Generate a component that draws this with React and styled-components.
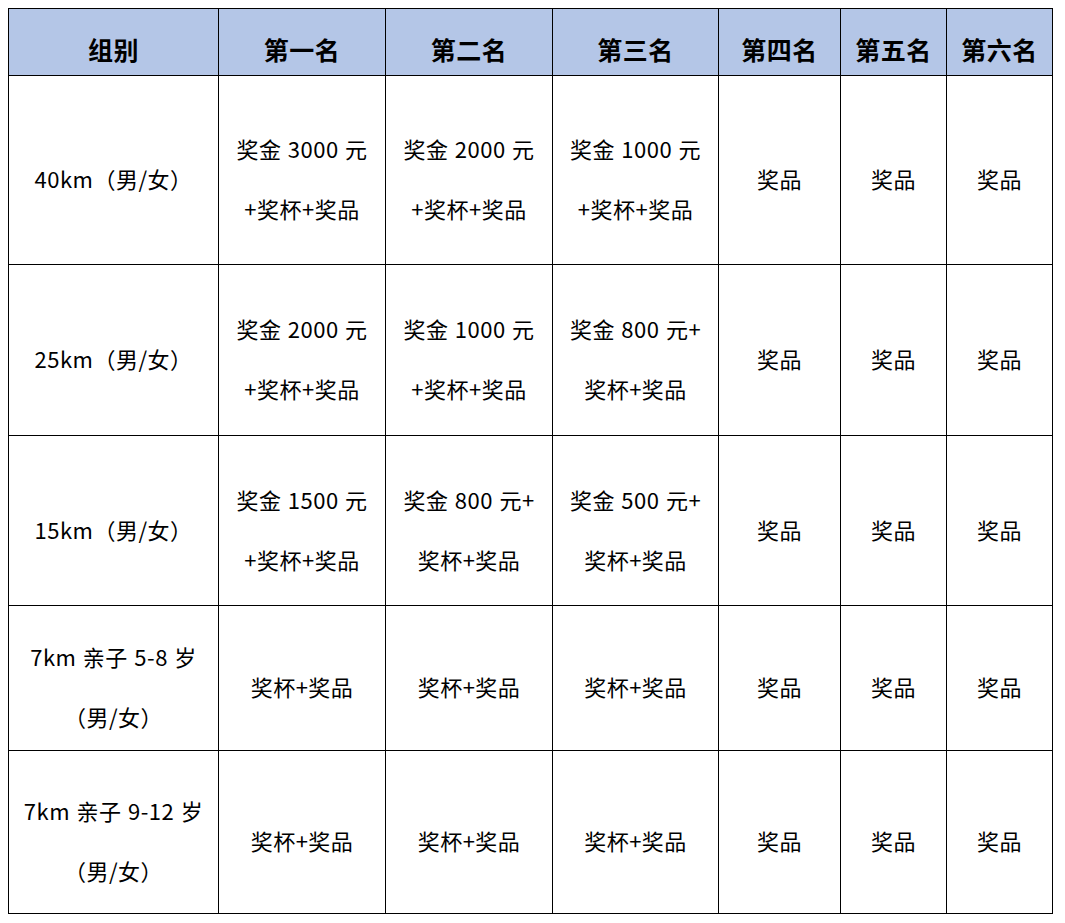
import React from 'react';
import styled, { createGlobalStyle } from 'styled-components';

const GlobalStyle = createGlobalStyle`
  body {
    margin: 8px;
    background: #ffffff;
    font-family: "Noto Sans CJK SC", "Liberation Sans", sans-serif;
    color: #000;
  }
`;

const Grid = styled.div`
  display: grid;
  grid-template-columns: 209px 166px 166px 165px 121px 105px 105px;
  grid-template-rows: 66px 188px 170px 169px 144px 162px;
  gap: 1px;
  width: max-content;
  background: #000;
  border: 1px solid #000;
`;

const HeadCell = styled.div`
  background: #b4c6e7;
  display: flex;
  align-items: center;
  justify-content: center;
  padding-top: 14px;
  box-sizing: border-box;
  font-size: 25px;
  font-weight: 700;
  letter-spacing: 0.5px;
`;

const Cell = styled.div`
  background: #fff;
  display: flex;
  flex-direction: column;
  align-items: center;
  justify-content: center;
  padding-top: 16px;
  box-sizing: border-box;
  font-size: 22px;
  line-height: 60px;
  letter-spacing: 0.5px;
  word-spacing: 1px;
  white-space: nowrap;
`;

const headers = ['组别', '第一名', '第二名', '第三名', '第四名', '第五名', '第六名'];

const rows = [
  [
    ['40km（男/女）'],
    ['奖金 3000 元', '+奖杯+奖品'],
    ['奖金 2000 元', '+奖杯+奖品'],
    ['奖金 1000 元', '+奖杯+奖品'],
    ['奖品'], ['奖品'], ['奖品'],
  ],
  [
    ['25km（男/女）'],
    ['奖金 2000 元', '+奖杯+奖品'],
    ['奖金 1000 元', '+奖杯+奖品'],
    ['奖金 800 元+', '奖杯+奖品'],
    ['奖品'], ['奖品'], ['奖品'],
  ],
  [
    ['15km（男/女）'],
    ['奖金 1500 元', '+奖杯+奖品'],
    ['奖金 800 元+', '奖杯+奖品'],
    ['奖金 500 元+', '奖杯+奖品'],
    ['奖品'], ['奖品'], ['奖品'],
  ],
  [
    ['7km 亲子 5-8 岁', '（男/女）'],
    ['奖杯+奖品'], ['奖杯+奖品'], ['奖杯+奖品'],
    ['奖品'], ['奖品'], ['奖品'],
  ],
  [
    ['7km 亲子 9-12 岁', '（男/女）'],
    ['奖杯+奖品'], ['奖杯+奖品'], ['奖杯+奖品'],
    ['奖品'], ['奖品'], ['奖品'],
  ],
];

export default function App() {
  return (
    <>
      <GlobalStyle />
      <Grid>
        {headers.map((h) => (
          <HeadCell key={h}>{h}</HeadCell>
        ))}
        {rows.map((row, r) =>
          row.map((lines, c) => (
            <Cell key={`${r}-${c}`}>
              {lines.map((line, i) => (
                <span key={i}>{line}</span>
              ))}
            </Cell>
          ))
        )}
      </Grid>
    </>
  );
}
